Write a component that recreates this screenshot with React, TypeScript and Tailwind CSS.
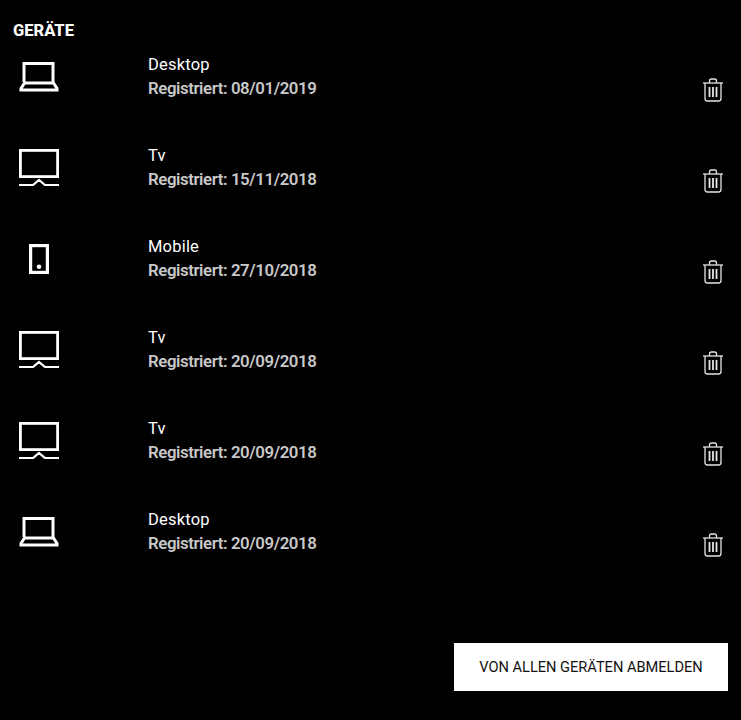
const font = { fontFamily: '"Roboto", "Liberation Sans", sans-serif' };

const Laptop = () => (
  <svg width="40" height="32" viewBox="0 0 40 32" fill="none" stroke="#fff">
    <path d="M5 22V3.500h29V22" strokeWidth="3" />
    <path d="M5.500 23h29L38 28.500v1.500H2v-1.500z" strokeWidth="3" />
  </svg>
);

const Tv = () => (
  <svg width="40" height="37" viewBox="0 0 40 37" fill="none" stroke="#fff">
    <rect x="1.400" y="1.400" width="37.200" height="26.200" strokeWidth="2.800" />
    <path d="M0 36h14l6-5 6 5h14" strokeWidth="2.200" />
  </svg>
);

const Mobile = () => (
  <svg width="20" height="32" viewBox="0 0 20 32" fill="none">
    <rect x="1.600" y="3.600" width="16.800" height="26.800" stroke="#fff" strokeWidth="3.200" />
    <circle cx="10" cy="24.700" r="2.300" fill="#fff" />
  </svg>
);

const Trash = () => (
  <svg width="20" height="24" viewBox="0 0 20 24" fill="none" stroke="#e5e5e5" strokeWidth="1.300">
    <path d="M0 5h20" />
    <path d="M6.500 5V3a2 2 0 0 1 2-2h3a2 2 0 0 1 2 2v2" />
    <path d="M2 5v15.500A2.500 2.500 0 0 0 4.500 23h11a2.500 2.500 0 0 0 2.500-2.500V5" />
    <path d="M6.500 9v10M10 9v10M13.500 9v10" strokeWidth="1.800" />
  </svg>
);

const rows = [
  { name: 'Desktop', date: '08/01/2019', icon: <Laptop /> },
  { name: 'Tv', date: '15/11/2018', icon: <Tv /> },
  { name: 'Mobile', date: '27/10/2018', icon: <Mobile /> },
  { name: 'Tv', date: '20/09/2018', icon: <Tv /> },
  { name: 'Tv', date: '20/09/2018', icon: <Tv /> },
  { name: 'Desktop', date: '20/09/2018', icon: <Laptop /> },
];

export default function App() {
  return (
    <div className="w-[741px] h-[720px] bg-black text-white overflow-hidden" style={font}>
      <h2 className="pl-[13px] pt-[21px] h-[53px] text-[16.500px] leading-[20px] font-extrabold">GERÄTE</h2>
      <ul className="flex flex-col">
        {rows.map((r, i) => (
          <li key={i} className="h-[91px] flex items-start">
            <div className="w-[78px] shrink-0 h-[46px] flex items-center justify-center">{r.icon}</div>
            <div className="ml-[70px] flex-1">
              <div className="text-[16.500px] leading-[23px] text-white tracking-[0.2px]">{r.name}</div>
              <div className="text-[16.800px] leading-[24px] font-semibold text-[#c8c8c8] tracking-[-0.4px]">Registriert: {r.date}</div>
            </div>
            <div className="pr-[18px] pt-[25px]"><Trash /></div>
          </li>
        ))}
      </ul>
      <div className="flex justify-end pr-[13px] pt-[44px]">
        <button className="w-[274px] h-[48px] pt-[2px] bg-white text-[#111] text-[14.600px] flex items-center justify-center">VON ALLEN GERÄTEN ABMELDEN</button>
      </div>
    </div>
  );
}
